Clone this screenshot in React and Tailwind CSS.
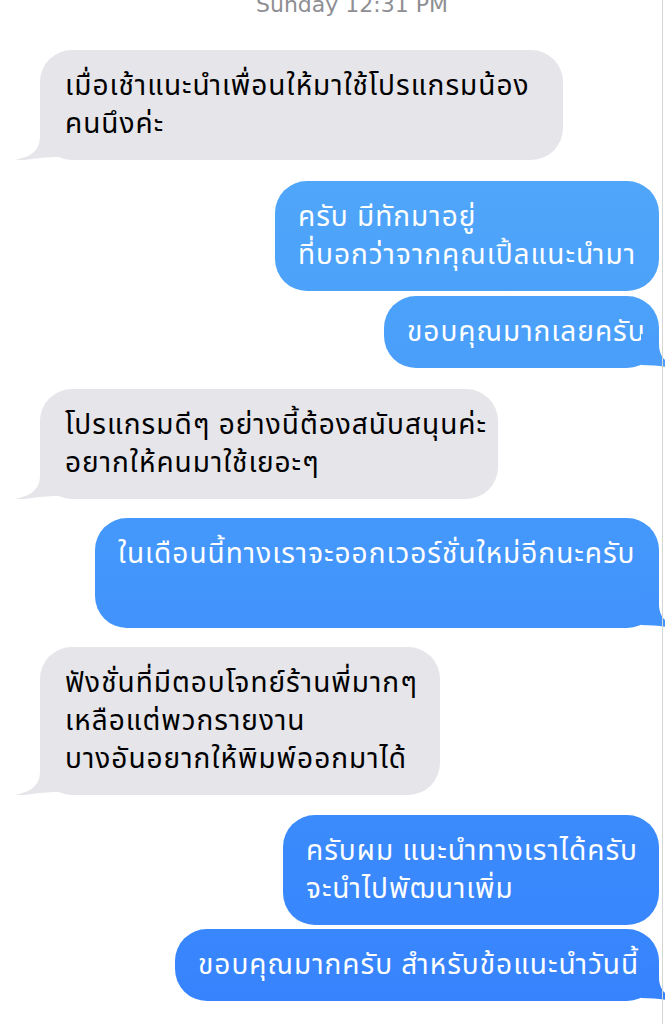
import React from 'react'

const THAI = "font-['Tahoma','Noto_Sans_Thai','Noto_Sans','DejaVu_Sans',sans-serif]"

// conversation, top to bottom
const messages = [
  { me: false, mt: 'mt-[35px]', w: 'w-[523px]', lines: ['เมื่อเช้าแนะนำเพื่อนให้มาใช้โปรแกรมน้อง', 'คนนึงค่ะ'], tail: true },
  { me: true, mt: 'mt-[21px]', w: 'w-[384px]', lines: ['ครับ มีทักมาอยู่', 'ที่บอกว่าจากคุณเปิ้ลแนะนำมา'] },
  { me: true, mt: 'mt-[5px]', w: 'w-[275px]', lines: ['ขอบคุณมากเลยครับ'], tail: true, tailColor: 'text-[#4a9dfa]' },
  { me: false, mt: 'mt-[21px]', w: 'w-[458px]', lines: ['โปรแกรมดีๆ อย่างนี้ต้องสนับสนุนค่ะ', 'อยากให้คนมาใช้เยอะๆ'], tail: true },
  { me: true, mt: 'mt-[19px]', w: 'w-[564px]', lines: ['ในเดือนนี้ทางเราจะออกเวอร์ชั่นใหม่อีกนะครับ', '\u00a0'], tail: true, tailColor: 'text-[#4293fb]' },
  { me: false, mt: 'mt-[19px]', w: 'w-[400px]', lines: ['ฟังชั่นที่มีตอบโจทย์ร้านพี่มากๆ', 'เหลือแต่พวกรายงาน', 'บางอันอยากให้พิมพ์ออกมาได้'], tail: true },
  { me: true, mt: 'mt-[20px]', w: 'w-[376px]', lines: ['ครับผม แนะนำทางเราได้ครับ', 'จะนำไปพัฒนาเพิ่ม'] },
  { me: true, mt: 'mt-[4px]', w: 'w-[484px]', lines: ['ขอบคุณมากครับ สำหรับข้อแนะนำวันนี้'], tail: true, tailColor: 'text-[#3783fd]' },
]

function Tail({ right, color }) {
  return (
    <svg
      viewBox="0 0 44 34"
      className={
        right
          ? `absolute bottom-0 right-[-26px] w-[44px] h-[34px] -scale-x-100 ${color}`
          : 'absolute bottom-0 left-[-26px] w-[44px] h-[34px] text-[#e5e5ea]'
      }
    >
      <path d="M26 0 L26 10 C26 24 18 31 0 34 C12 35 24 31 44 31 L44 0 Z" fill="currentColor" />
    </svg>
  )
}

function Bubble({ m }) {
  return (
    <div className={`${m.me ? 'self-end' : 'self-start ml-[40px]'} ${m.mt} relative`}>
      <div
        className={
          m.me
            ? `relative ${m.w} rounded-[32px] pl-[23px] pr-[16px] pt-[18px] pb-[16px] text-white bg-fixed bg-gradient-to-b from-[#56adf8] to-[#3682fd]`
            : `relative ${m.w} rounded-[32px] pl-[25px] pr-[16px] pt-[18px] pb-[16px] text-black bg-[#e5e5ea]`
        }
      >
        {m.lines.map((l, i) => (
          <div key={i} className="text-[28px] leading-[38px] tracking-[1px] whitespace-nowrap">{l}</div>
        ))}
      </div>
      {m.tail && <Tail right={m.me} color={m.tailColor} />}
    </div>
  )
}

export default function App() {
  return (
    <div className={`w-[665px] h-[1024px] overflow-hidden bg-white flex ${THAI}`}>
      <div className="w-[662px] pr-[3px] flex flex-col">
        <div className="-mt-[5px] pl-[45px] h-[20px] leading-[20px] text-center text-[22px] text-[#8e8e93] font-['DejaVu_Sans',sans-serif]">
          Sunday 12:31 PM
        </div>
        {messages.map((m, i) => (
          <Bubble key={i} m={m} />
        ))}
      </div>
      <div className="relative z-10 w-px h-full bg-[#d6d6d6]" />
      <div className="w-[2px]" />
    </div>
  )
}
